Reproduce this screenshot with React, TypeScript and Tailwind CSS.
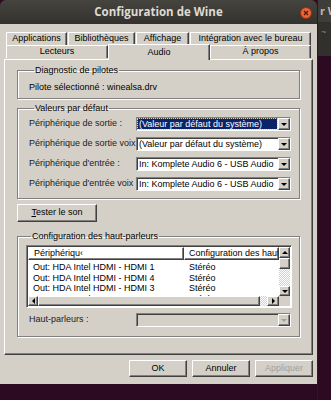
import React from "react"

const raised = "border border-t-white border-l-white border-r-[#404040] border-b-[#404040] shadow-[inset_-1px_-1px_0_#808080]"
const sunken = "border border-t-[#808080] border-l-[#808080] border-r-white border-b-white shadow-[inset_1px_1px_0_#404040]"

function Arrow({ dir = "down", dim = false }: { dir?: "down" | "up" | "left" | "right"; dim?: boolean }) {
    const pts: Record<string, string> = {
        down: "0,0 6,0 3,3",
        up: "0,3 6,3 3,0",
        left: "3,0 3,6 0,3",
        right: "0,0 0,6 3,3",
    }
    const vertical = dir === "down" || dir === "up"
    return (
        <svg width={vertical ? 6 : 3} height={vertical ? 3 : 6} viewBox={vertical ? "0 0 6 3" : "0 0 3 6"}>
            <polygon points={pts[dir]} fill={dim ? "#a0a0a0" : "#000"} />
        </svg>
    )
}

function Combo({ value, selected = false, disabled = false }: { value: string; selected?: boolean; disabled?: boolean }) {
    return (
        <div className={`flex h-[14px] w-[155px] ${disabled ? "bg-[#d4d0c8]" : "bg-white"} ${sunken}`}>
            <div className="flex flex-1 items-center px-[1px] py-[1px] overflow-hidden">
                <span
                    className={`whitespace-nowrap leading-[10px] px-[1px] ${selected ? "flex-1 bg-[#0a246a] text-white outline outline-1 outline-dotted outline-[#d4d0c8]" : ""}`}
                >
                    {value}
                </span>
            </div>
            <div className={`flex w-[12px] items-center justify-center bg-[#d4d0c8] ${raised}`}>
                <Arrow dim={disabled} />
            </div>
        </div>
    )
}

function Button({ label, disabled = false, className = "" }: { label: React.ReactNode; disabled?: boolean; className?: string }) {
    return (
        <div className={`flex items-center justify-center bg-[#d4d0c8] ${raised} ${disabled ? "text-[#a0a0a0]" : ""} ${className}`}>
            {label}
        </div>
    )
}

function Group({ title, children, className = "" }: { title: string; children: React.ReactNode; className?: string }) {
    return (
        <fieldset className={`border border-[#808080] shadow-[inset_1px_1px_0_#fff,1px_1px_0_#fff] ${className}`}>
            <legend className="ml-[5px] px-[1px] leading-[12px]">{title}</legend>
            {children}
        </fieldset>
    )
}

const devices = [
    { name: "Out: HDA Intel HDMI - HDMI 1", cfg: "Stéréo" },
    { name: "Out: HDA Intel HDMI - HDMI 4", cfg: "Stéréo" },
    { name: "Out: HDA Intel HDMI - HDMI 3", cfg: "Stéréo" },
    { name: "Out: HDA Intel HDMI - HDMI 2", cfg: "Stéréo" },
]

function Tab({ label, w, active = false }: { label: string; w: string; active?: boolean }) {
    return (
        <div
            className={`flex items-center justify-center border border-b-0 border-t-white border-l-white border-r-[#404040] shadow-[inset_-1px_0_0_#808080] bg-[#d4d0c8] ${w} ${active ? "h-[16px] -mt-[1px] relative z-10" : "h-[13px]"}`}
        >
            {label}
        </div>
    )
}

export default function App() {
    return (
        <div className="flex w-[331px] h-[400px] bg-[#2c0b22] overflow-hidden text-black text-[9px]" style={{ fontFamily: '"Liberation Sans", Arial, sans-serif' }}>
            {/* wine window */}
            <div className="flex flex-col w-[317px] shrink-0">
                <div className="relative flex h-[24px] items-center justify-center rounded-t-[6px] bg-gradient-to-b from-[#45443f] to-[#33322e]">
                    <span className="font-bold text-[11.5px] text-[#dfdbd2]" style={{ fontFamily: '"Open Sans", "Liberation Sans", sans-serif' }}>
                        Configuration de Wine
                    </span>
                    <div className="absolute right-[5px] top-[7px] flex h-[12px] w-[12px] items-center justify-center rounded-full border border-[#8a3214] bg-[#ee6234]">
                        <svg width="6" height="6" viewBox="0 0 6 6">
                            <path d="M1 1L5 5M5 1L1 5" stroke="#4a1a08" strokeWidth="1.2" />
                        </svg>
                    </div>
                </div>

                <div className="flex flex-col h-[360px] bg-[#d4d0c8] px-[4px] pt-[8px]">
                    {/* tabs */}
                    <div className="flex pl-[2px] gap-[1px]">
                        <Tab label="Applications" w="w-[61px]" />
                        <Tab label="Bibliothèques" w="w-[67px]" />
                        <Tab label="Affichage" w="w-[53px]" />
                        <Tab label="Intégration avec le bureau" w="w-[121px]" />
                    </div>
                    <div className="flex pl-[2px]">
                        <Tab label="Lecteurs" w="w-[102px]" />
                        <Tab label="Audio" w="w-[102px]" active />
                        <Tab label="À propos" w="w-[101px]" />
                    </div>

                    {/* panel */}
                    <div className={`flex flex-col h-[296px] -mt-[1px] px-[12px] pt-[4px] ${raised}`}>
                        <Group title="Diagnostic de pilotes" className="h-[35px] px-[11px] pt-[5px]">
                            <div className="leading-[12px]">Pilote sélectionné : winealsa.drv</div>
                        </Group>

                        <Group title="Valeurs par défaut" className="mt-[3px] h-[97px] pl-[11px] pt-[3px]">
                            <div className="flex flex-col gap-[6px]">
                                {[
                                    ["Périphérique de sortie :", "(Valeur par défaut du système)", true],
                                    ["Périphérique de sortie voix", "(Valeur par défaut du système)", false],
                                    ["Périphérique d'entrée :", "In: Komplete Audio 6 - USB Audio", false],
                                    ["Périphérique d'entrée voix", "In: Komplete Audio 6 - USB Audio", false],
                                ].map(([label, value, sel]) => (
                                    <div key={label as string} className="flex items-center">
                                        <div className="w-[107px] overflow-hidden whitespace-nowrap text-[#222]">{label as string}</div>
                                        <Combo value={value as string} selected={sel as boolean} />
                                    </div>
                                ))}
                            </div>
                        </Group>

                        <Button
                            label={<span><span className="underline">T</span>ester le son</span>}
                            className="mt-[5px] h-[18px] w-[80px]"
                        />

                        <Group title="Configuration des haut-parleurs" className="mt-[8px] h-[107px] pl-[8px] pt-[3px]">
                            <div className={`grid grid-cols-[1fr_11px] grid-rows-[1fr_10px] h-[63px] w-[266px] bg-white ${sunken} p-[1px]`}>
                                <div className="flex flex-col overflow-hidden">
                                    <div className="flex h-[13px] shrink-0">
                                        <div className={`flex items-center w-[156px] px-[5px] ${raised} overflow-hidden whitespace-nowrap`}>Périphériqu‹</div>
                                        <div className={`flex items-center flex-1 px-[4px] ${raised} overflow-hidden whitespace-nowrap`}>Configuration des haut</div>
                                    </div>
                                    <div className="flex flex-col pt-[2px]">
                                        {devices.map((d) => (
                                            <div key={d.name} className="flex h-[10.5px] shrink-0 items-center leading-[10px]">
                                                <div className="w-[156px] pl-[5px] whitespace-nowrap">{d.name}</div>
                                                <div className="pl-[5px]">{d.cfg}</div>
                                            </div>
                                        ))}
                                    </div>
                                </div>
                                <div className="flex flex-col bg-[repeating-conic-gradient(#d4d0c8_0_25%,#ffffff_0_50%)] bg-[length:2px_2px]">
                                    <div className={`flex h-[11px] items-center justify-center bg-[#d4d0c8] ${raised}`}><Arrow dir="up" /></div>
                                    <div className={`h-[11px] bg-[#d4d0c8] ${raised}`} />
                                    <div className="flex-1" />
                                    <div className={`flex h-[10px] items-center justify-center bg-[#d4d0c8] ${raised}`}><Arrow /></div>
                                </div>
                                <div className="flex bg-[repeating-conic-gradient(#d4d0c8_0_25%,#ffffff_0_50%)] bg-[length:2px_2px]">
                                    <div className={`flex w-[10px] items-center justify-center bg-[#d4d0c8] ${raised}`}><Arrow dir="left" /></div>
                                    <div className={`w-[222px] bg-[#d4d0c8] ${raised}`} />
                                    <div className="flex-1" />
                                    <div className={`flex w-[12px] items-center justify-center bg-[#d4d0c8] ${raised}`}><Arrow dir="right" /></div>
                                </div>
                                <div className="bg-[#d4d0c8]" />
                            </div>
                            <div className="mt-[5px] flex items-center pl-[3px]">
                                <div className="w-[107px] text-[#222]">Haut-parleurs :</div>
                                <Combo value="" disabled />
                            </div>
                        </Group>
                    </div>

                    {/* dialog buttons */}
                    <div className="mt-[5px] flex justify-end gap-[5px] pr-[0px]">
                        <Button label="OK" className="h-[17px] w-[58px] border-black" />
                        <Button label="Annuler" className="h-[17px] w-[58px]" />
                        <Button label="Appliquer" disabled className="h-[17px] w-[58px]" />
                    </div>
                </div>
            </div>

            {/* desktop behind */}
            <div className="flex flex-col flex-1 border-l border-[#1f1f1d]">
                <div className="flex h-[22px] items-center bg-[#3e3d39] pl-[2px] text-[11px] font-bold text-[#bdb9b0] whitespace-nowrap overflow-hidden" style={{ fontFamily: '"Open Sans", sans-serif' }}>
                    r W
                </div>
                <div className="h-[34px] bg-[#31302d] pl-[3px] pt-[4px] text-[9px] text-[#8a8883]">~</div>
                <div className="flex-1" />
            </div>
        </div>
    )
}
